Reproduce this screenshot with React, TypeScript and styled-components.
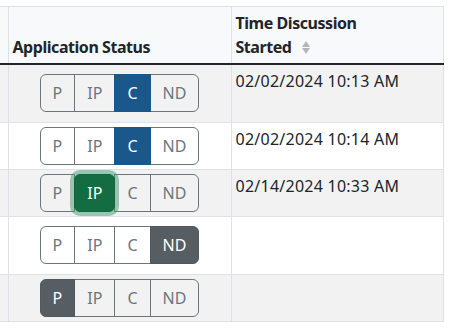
import React from "react";
import styled, { createGlobalStyle, css } from "styled-components";

const GlobalStyle = createGlobalStyle`
  html, body {
    margin: 0;
    padding: 0;
    background: #fff;
  }
  body {
    font-family: "Noto Sans", "Open Sans", sans-serif;
    font-size: 16px;
    line-height: 1.5;
    color: #212529;
  }
`;

const Wrapper = styled.div`
  padding-top: 6px;
  width: 444px;
`;

const Table = styled.table`
  width: 444px;
  border-collapse: collapse;
  table-layout: fixed;
  border-top: 1px solid #dee2e6;
  border-right: 1px solid #dee2e6;
`;

const HeadCell = styled.th<{ $narrow?: boolean }>`
  background: #f8f9fa;
  font-weight: 700;
  letter-spacing: -0.45px;
  text-align: left;
  vertical-align: bottom;
  padding: 4px 4px;
  height: 48px;
  border-right: 1px solid #dee2e6;
  border-bottom: 2px solid #212529;
  ${(p) =>
    p.$narrow &&
    css`
      padding: 0;
    `}
`;

const SortIcon = styled.svg`
  display: inline-block;
  margin-left: 11px;
  vertical-align: -1px;
`;

const Row = styled.tr<{ $striped: boolean; $tall?: boolean }>`
  background: ${(p) => (p.$striped ? "#f2f2f2" : "#fff")};
  height: ${(p) => (p.$tall ? "58px" : "47px")};
`;

const Cell = styled.td<{ $align?: "top" | "middle" }>`
  padding: 4px;
  vertical-align: ${(p) => p.$align || "top"};
  letter-spacing: 0.25px;
  border-right: 1px solid #dee2e6;
  border-bottom: 1px solid #dee2e6;
`;

const EdgeCell = styled.td`
  padding: 0;
  border-right: 1px solid #dee2e6;
  border-bottom: 1px solid #dee2e6;
`;

const Group = styled.div`
  display: flex;
  justify-content: center;
`;

const StatusButton = styled.button<{ $tone?: "primary" | "success" | "dark"; $focus?: boolean }>`
  font-family: inherit;
  font-size: 16px;
  line-height: 24px;
  letter-spacing: 0;
  padding: 6px 12px;
  border: 1px solid #6c757d;
  background: transparent;
  color: #6c757d;
  border-radius: 0;
  margin-left: -1px;
  position: relative;

  &:first-child {
    margin-left: 0;
    border-top-left-radius: 6px;
    border-bottom-left-radius: 6px;
  }
  &:last-child {
    border-top-right-radius: 6px;
    border-bottom-right-radius: 6px;
  }

  ${(p) =>
    p.$tone === "primary" &&
    css`
      background: #1a578b;
      border-color: #1a578b;
      color: #fff;
      z-index: 1;
    `}
  ${(p) =>
    p.$tone === "success" &&
    css`
      background: #146c43;
      border-color: #13653f;
      color: #fff;
      z-index: 1;
    `}
  ${(p) =>
    p.$tone === "dark" &&
    css`
      background: #565e64;
      border-color: #51585e;
      color: #fff;
      z-index: 1;
    `}
  ${(p) =>
    p.$focus &&
    css`
      border-radius: 6px;
      box-shadow: 0 0 0 4px rgba(60, 153, 110, 0.5);
    `}
`;

type Status = "P" | "IP" | "C" | "ND";

const rows: {
  status: Status;
  tone: "primary" | "success" | "dark";
  focus?: boolean;
  time: string;
  tall?: boolean;
}[] = [
  { status: "C", tone: "primary", time: "02/02/2024 10:13 AM", tall: true },
  { status: "C", tone: "primary", time: "02/02/2024 10:14 AM" },
  { status: "IP", tone: "success", focus: true, time: "02/14/2024 10:33 AM" },
  { status: "ND", tone: "dark", time: "", tall: true },
  { status: "P", tone: "dark", time: "" },
];

const options: Status[] = ["P", "IP", "C", "ND"];

export default function App() {
  return (
    <Wrapper>
      <GlobalStyle />
      <Table>
        <colgroup>
          <col style={{ width: 8 }} />
          <col style={{ width: 223 }} />
          <col />
        </colgroup>
        <thead>
          <tr>
            <HeadCell $narrow />
            <HeadCell>Application Status</HeadCell>
            <HeadCell>
              Time Discussion
              <br />
              Started
              <SortIcon width="8" height="13" viewBox="0 0 8 13">
                <path d="M4 0 L8 6 L0 6 Z" fill="#b3b6b9" />
                <path d="M0 7 L8 7 L4 13 Z" fill="#b3b6b9" />
              </SortIcon>
            </HeadCell>
          </tr>
        </thead>
        <tbody>
          {rows.map((row, i) => (
            <Row key={i} $striped={i % 2 === 0} $tall={row.tall}>
              <EdgeCell />
              <Cell $align="middle">
                <Group>
                  {options.map((opt) => (
                    <StatusButton
                      key={opt}
                      $tone={opt === row.status ? row.tone : undefined}
                      $focus={opt === row.status && row.focus}
                    >
                      {opt}
                    </StatusButton>
                  ))}
                </Group>
              </Cell>
              <Cell>{row.time}</Cell>
            </Row>
          ))}
        </tbody>
      </Table>
    </Wrapper>
  );
}
